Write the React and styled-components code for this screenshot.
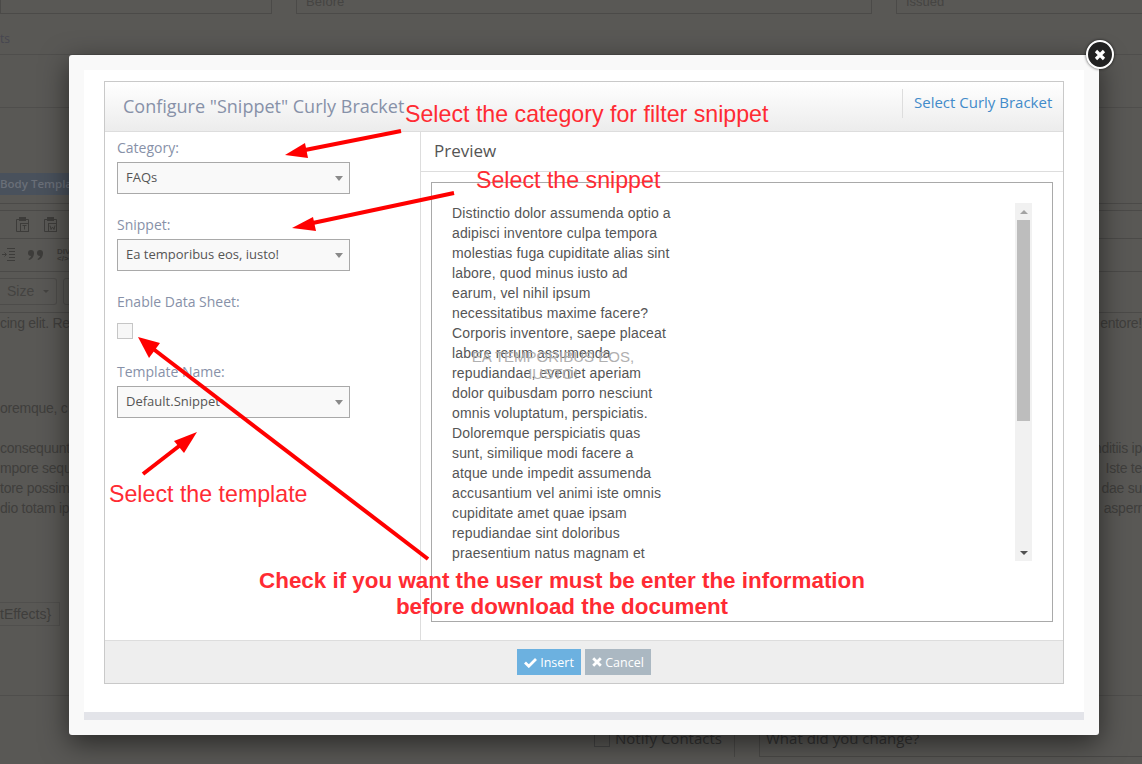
import styled, { createGlobalStyle } from "styled-components";

const GlobalStyle = createGlobalStyle`
  html, body { margin: 0; padding: 0; height: 100%; overflow: hidden; background: #595855; }
  * { box-sizing: border-box; }
`;

const Page = styled.div`
  position: relative;
  width: 1142px;
  height: 764px;
  overflow: hidden;
  background: #595855;
  font-family: "Liberation Sans", Arial, sans-serif;
  font-size: 14px;
  color: #3f3e3c;
`;

/* dimmed page behind the dialog */
const TopFields = styled.div`
  display: grid;
  grid-template-columns: 272px 576px 1fr;
  column-gap: 24px;
  height: 14px;
`;

const TopField = styled.div`
  height: 14px;
  padding-left: 9px;
  overflow: hidden;
  border: 1px solid #4b4a48;
  border-top: 0;
  font-size: 13px;
  line-height: 4px;
  color: #454442;
  margin-right: ${(p) => (p.$last ? "-4px" : "0")};
`;

const TabsRow = styled.div`
  height: 41px;
  padding-top: 17px;
  line-height: 16px;
  font-family: "Open Sans", sans-serif;
  font-size: 12px;
  color: #464650;
  border-bottom: 1px solid #4f4e4c;
`;

const Spacer = styled.div`
  height: ${(p) => p.$h}px;
  border-bottom: ${(p) => (p.$line ? "1px solid #4f4e4c" : "0")};
`;

const BodyTab = styled.div`
  width: 80px;
  height: 22px;
  background: #49515c;
  color: #6a6f78;
  font-family: "Open Sans", sans-serif;
  font-size: 11.5px;
  font-weight: 600;
  line-height: 22px;
  white-space: nowrap;
`;

const ToolbarRow = styled.div`
  display: flex;
  align-items: center;
  gap: ${(p) => p.$gap || 0}px;
  height: ${(p) => p.$h}px;
  padding-left: ${(p) => p.$pl || 0}px;
  border-bottom: 1px solid #4b4a48;
  color: #403f3d;
`;

const SizeRow = styled(ToolbarRow)`
  padding-bottom: 2px;
`;

const SizeBox = styled.div`
  display: flex;
  align-items: center;
  justify-content: space-between;
  width: 57px;
  height: 27px;
  padding: 0 7px 0 7px;
  border: 1px solid #4d4c4a;
  border-left: 0;
  border-radius: 0 3px 3px 0;
  color: #444341;
  font-size: 14px;
`;

const NextBox = styled.div`
  width: 20px;
  height: 27px;
  margin-left: 6px;
  border: 1px solid #4d4c4a;
  border-radius: 3px;
`;

const BgCaret = styled.span`
  width: 0;
  height: 0;
  border-left: 3px solid transparent;
  border-right: 3px solid transparent;
  border-top: 3px solid #444341;
`;

const DivIcon = styled.div`
  font-size: 8px;
  line-height: 7px;
  font-weight: 700;
  color: #3d3c3a;
  white-space: nowrap;
`;

const BgRow = styled.div`
  display: flex;
  justify-content: space-between;
  height: 20px;
  line-height: 20px;
  letter-spacing: -0.25px;
  white-space: nowrap;
  margin-top: ${(p) => p.$mt || 0}px;
`;

const EffectsBox = styled.div`
  width: 60px;
  height: 24px;
  margin-top: ${(p) => p.$mt}px;
  border: 1px solid #504f4d;
  border-left: 0;
  line-height: 22px;
  text-align: right;
  padding-right: 8px;
  white-space: nowrap;
  overflow: hidden;
`;

const BottomRow = styled.div`
  display: flex;
  height: 31px;
  padding-left: 594px;
  font-family: "Open Sans", sans-serif;
  font-size: 15px;
  line-height: 24px;
  color: #333;
`;

const NotifyCheck = styled.div`
  width: 16px;
  height: 16px;
  margin: 5px 5px 0 0;
  border: 1px solid #444;
`;

const NotifyLabel = styled.div`
  width: 120px;
  white-space: nowrap;
  border-right: 1px solid #4a4947;
`;

const NotifyInput = styled.div`
  flex: 1;
  margin-left: 24px;
  padding-left: 6px;
  border-left: 1px solid #4a4947;
  border-bottom: 1px solid #4a4947;
  white-space: nowrap;
`;

/* dialog */
const Modal = styled.div`
  position: absolute;
  left: 69px;
  top: 55px;
  width: 1030px;
  height: 680px;
  padding: 15px;
  background: #f9f9f9;
  border-radius: 3px;
  box-shadow: 0 8px 28px rgba(0, 0, 0, 0.55);
`;

const ModalInner = styled.div`
  display: flex;
  flex-direction: column;
  height: 650px;
  padding: 11px 20px 0;
  background: #fff;
  border-bottom: 8px solid #e3e4e9;
`;

const Panel = styled.div`
  display: flex;
  flex-direction: column;
  height: 603px;
  border: 1px solid #c9c9c9;
  font-family: "Open Sans", sans-serif;
`;

const PanelHeader = styled.div`
  display: flex;
  justify-content: space-between;
  height: 50px;
  border-bottom: 1px solid #ddd;
  background: linear-gradient(#fff, #ececec);
`;

const PanelTitle = styled.div`
  padding: 12px 0 0 18px;
  font-size: 18px;
  line-height: 24px;
  color: #8791a8;
  white-space: nowrap;
`;

const HeaderAction = styled.div`
  margin: 7px 0 13px;
  padding: 3px 11px 0;
  width: 161px;
  border-left: 1px solid #ddd;
  font-size: 15px;
  line-height: 20px;
  color: #428bca;
  white-space: nowrap;
`;

const PanelBody = styled.div`
  display: flex;
  height: 508px;
`;

const Sidebar = styled.div`
  width: 316px;
  flex: none;
  padding: 6px 12px 0;
  border-right: 1px solid #ddd;
`;

const FieldLabel = styled.div`
  height: 20px;
  font-size: 14px;
  line-height: 20px;
  color: #8791a8;
  margin-top: ${(p) => p.$mt || 0}px;
`;

const Select = styled.div`
  display: flex;
  align-items: center;
  justify-content: space-between;
  width: 233px;
  height: 32px;
  margin-top: 4px;
  padding: 0 6px 2px 8px;
  background: #f9f9f9;
  border: 1px solid #a9a9a9;
  font-size: 13px;
  color: #555;
`;

const Caret = styled.span`
  width: 0;
  height: 0;
  margin-top: 2px;
  border-left: 4px solid transparent;
  border-right: 4px solid transparent;
  border-top: 5px solid #8a8a8a;
`;

const Checkbox = styled.div`
  width: 16px;
  height: 16px;
  margin-top: 11px;
  background: #f7f7f7;
  border: 1px solid #c6c6c6;
`;

const PreviewColumn = styled.div`
  flex: 1;
  min-width: 0;
`;

const PreviewHeader = styled.div`
  height: 40px;
  padding: 7px 0 0 13px;
  font-size: 17px;
  line-height: 24px;
  color: #555;
  border-bottom: 1px solid #ddd;
`;

const PreviewBox = styled.div`
  position: relative;
  display: flex;
  justify-content: space-between;
  width: 622px;
  height: 440px;
  margin: 10px 0 0 10px;
  padding: 20px 20px 0 20px;
  border: 1px solid #a9a9a9;
`;

const PreviewText = styled.div`
  width: 225px;
  height: 358px;
  overflow: hidden;
  font-family: "Liberation Sans", Arial, sans-serif;
  font-size: 14px;
  letter-spacing: 0.14px;
  line-height: 20px;
  color: #555;
`;

const GhostText = styled.div`
  position: absolute;
  left: 30px;
  top: 165px;
  width: 182px;
  text-align: center;
  font-family: "Liberation Sans", Arial, sans-serif;
  font-size: 15px;
  line-height: 17px;
  color: #b0b0b0;
`;

const Scrollbar = styled.div`
  display: flex;
  flex-direction: column;
  align-items: center;
  width: 17px;
  height: 358px;
  background: #f1f1f1;
`;

const ScrollArrow = styled.div`
  display: flex;
  align-items: center;
  justify-content: center;
  height: 17px;
  flex: none;
  margin-top: ${(p) => (p.$end ? "auto" : "0")};
`;

const ScrollTriangle = styled.span`
  width: 0;
  height: 0;
  border-left: 4px solid transparent;
  border-right: 4px solid transparent;
  ${(p) => (p.$up ? "border-bottom: 4px solid #a3a3a3;" : "border-top: 4px solid #505050;")}
`;

const ScrollThumb = styled.div`
  width: 13px;
  height: 201px;
  background: #bdbdbd;
`;

const PanelFooter = styled.div`
  display: flex;
  justify-content: center;
  gap: 4px;
  height: 43px;
  padding-top: 8px;
  background: #eee;
  border-top: 1px solid #ddd;
  margin-top: auto;
`;

const ActionButton = styled.div`
  display: flex;
  align-items: center;
  justify-content: center;
  gap: 3px;
  width: ${(p) => p.$w}px;
  height: 26px;
  background: ${(p) => p.$bg};
  color: #fff;
  font-size: 12.5px;
  font-weight: 400;
`;

const CloseButton = styled.div`
  position: absolute;
  left: 1086px;
  top: 40px;
  display: flex;
  align-items: center;
  justify-content: center;
  width: 28px;
  height: 29px;
  border-radius: 50%;
  background: #222;
  border: 2px solid #fff;
  box-shadow: 0 0 3px rgba(0, 0, 0, 0.7);
`;

/* red annotations drawn on top of the screenshot */
const ArrowLayer = styled.svg`
  position: absolute;
  left: 0;
  top: 0;
  pointer-events: none;
`;

const Note = styled.div`
  position: absolute;
  left: ${(p) => p.$x}px;
  top: ${(p) => p.$y}px;
  width: ${(p) => p.$w || "auto"};
  text-align: ${(p) => (p.$w ? "center" : "left")};
  font-family: "Liberation Sans", Arial, sans-serif;
  font-size: ${(p) => (p.$bold ? 22.4 : 23.2)}px;
  font-weight: ${(p) => (p.$bold ? 700 : 400)};
  line-height: ${(p) => (p.$bold ? "26px" : "28px")};
  color: #ff2b33;
  white-space: nowrap;
`;

const previewLines = [
  "Distinctio dolor assumenda optio a",
  "adipisci inventore culpa tempora",
  "molestias fuga cupiditate alias sint",
  "labore, quod minus iusto ad",
  "earum, vel nihil ipsum",
  "necessitatibus maxime facere?",
  "Corporis inventore, saepe placeat",
  "labore rerum assumenda",
  "repudiandae, eveniet aperiam",
  "dolor quibusdam porro nesciunt",
  "omnis voluptatum, perspiciatis.",
  "Doloremque perspiciatis quas",
  "sunt, similique modi facere a",
  "atque unde impedit assumenda",
  "accusantium vel animi iste omnis",
  "cupiditate amet quae ipsam",
  "repudiandae sint doloribus",
  "praesentium natus magnam et",
];

// line, then head as a filled triangle
const arrows = [
  { x1: 401, y1: 131, x2: 300, y2: 151, head: "285,155 305,143 308,158" },
  { x1: 454, y1: 193, x2: 308, y2: 224, head: "292,228 313,217 316,231" },
  { x1: 143, y1: 474, x2: 183, y2: 443, head: "197,432 174,441 184,453" },
  { x1: 428, y1: 559, x2: 152, y2: 348, head: "138,337 160,343 149,358" },
];

function Arrows() {
  return (
    <ArrowLayer width="1142" height="764" viewBox="0 0 1142 764">
      {arrows.map((a) => (
        <g key={a.head}>
          <line x1={a.x1} y1={a.y1} x2={a.x2} y2={a.y2} stroke="#f00" strokeWidth="4" />
          <polygon points={a.head} fill="#f00" />
        </g>
      ))}
    </ArrowLayer>
  );
}

function PasteIcon({ letter }) {
  return (
    <svg width="13" height="15" viewBox="0 0 13 15" fill="none" stroke="#3d3c3a">
      <path d="M3 2.5H.5V14.5H4M10 2.5H12.5V6" />
      <rect x="3.5" y="0.5" width="6" height="3" fill="#3d3c3a" />
      <rect x="4.5" y="6.5" width="8" height="8" />
      <path d={letter === "T" ? "M6.5 8.5H10.5M8.5 8.5V12.5" : "M6 8.5L7 12.5L8.5 10L10 12.5L11 8.5"} />
    </svg>
  );
}

function Background() {
  return (
    <>
      <TopFields>
        <TopField />
        <TopField>Before</TopField>
        <TopField $last>Issued</TopField>
      </TopFields>
      <TabsRow>ts</TabsRow>
      <Spacer $h={53} $line />
      <Spacer $h={65} />
      <BodyTab>Body Template</BodyTab>
      <ToolbarRow $h={9} />
      <ToolbarRow $h={7} />
      <ToolbarRow $h={28} $pl={16} $gap={15}>
        <PasteIcon letter="T" />
        <PasteIcon letter="W" />
      </ToolbarRow>
      <ToolbarRow $h={33} $pl={2} $gap={13}>
        <svg width="13" height="14" viewBox="0 0 13 14" stroke="#3d3c3a" fill="none">
          <path d="M5 .5H13M7 3.5H13M7 6.5H13M7 9.5H13M5 12.5H13M0 6.5H4M2.5 4.5L4.5 6.5L2.5 8.5" />
        </svg>
        <svg width="16" height="10" viewBox="0 0 16 10" fill="#3d3c3a">
          <path d="M0 3a3 3 0 1 1 6 0C6 7 4 9 1 10L.5 9C2 8 3 7 3 6A3 3 0 0 1 0 3ZM9 3a3 3 0 1 1 6 0C15 7 13 9 10 10L9.500 9C11 8 12 7 12 6A3 3 0 0 1 9 3Z" />
        </svg>
        <DivIcon>
          DIV
          <br />
          {"</>"}
        </DivIcon>
      </ToolbarRow>
      <SizeRow $h={41}>
        <SizeBox>
          Size
          <BgCaret />
        </SizeBox>
        <NextBox />
      </SizeRow>
      <BgRow>
        <span>cing elit. Re</span>
        <span>entore!</span>
      </BgRow>
      <BgRow $mt={65}>
        <span>oremque, c</span>
      </BgRow>
      <BgRow $mt={20}>
        <span>consequunt</span>
        <span>nditiis ip</span>
      </BgRow>
      <BgRow>
        <span>mpore sequ</span>
        <span>Iste te</span>
      </BgRow>
      <BgRow>
        <span>tore possim</span>
        <span>dae su</span>
      </BgRow>
      <BgRow>
        <span>dio totam ip</span>
        <span>asperr</span>
      </BgRow>
      <EffectsBox $mt={84}>tEffects}</EffectsBox>
      <Spacer $h={70} $line />
      <Spacer $h={30} />
      <BottomRow>
        <NotifyCheck />
        <NotifyLabel>Notify Contacts</NotifyLabel>
        <NotifyInput>What did you change?</NotifyInput>
      </BottomRow>
    </>
  );
}

export default function App() {
  return (
    <Page>
      <GlobalStyle />
      <Background />
      <Modal>
        <ModalInner>
          <Panel>
            <PanelHeader>
              <PanelTitle>Configure "Snippet" Curly Bracket</PanelTitle>
              <HeaderAction>Select Curly Bracket</HeaderAction>
            </PanelHeader>
            <PanelBody>
              <Sidebar>
                <FieldLabel>Category:</FieldLabel>
                <Select>
                  FAQs
                  <Caret />
                </Select>
                <FieldLabel $mt={21}>Snippet:</FieldLabel>
                <Select>
                  Ea temporibus eos, iusto!
                  <Caret />
                </Select>
                <FieldLabel $mt={21}>Enable Data Sheet:</FieldLabel>
                <Checkbox />
                <FieldLabel $mt={23}>Template Name:</FieldLabel>
                <Select>
                  Default.Snippet
                  <Caret />
                </Select>
              </Sidebar>
              <PreviewColumn>
                <PreviewHeader>Preview</PreviewHeader>
                <PreviewBox>
                  <PreviewText>
                    {previewLines.map((line) => (
                      <div key={line}>{line}</div>
                    ))}
                  </PreviewText>
                  <GhostText>EA TEMPORIBUS EOS, IUSTO!</GhostText>
                  <Scrollbar>
                    <ScrollArrow>
                      <ScrollTriangle $up />
                    </ScrollArrow>
                    <ScrollThumb />
                    <ScrollArrow $end>
                      <ScrollTriangle />
                    </ScrollArrow>
                  </Scrollbar>
                </PreviewBox>
              </PreviewColumn>
            </PanelBody>
            <PanelFooter>
              <ActionButton $w={64} $bg="#6cb1e0">
                <svg width="13" height="11" viewBox="0 0 13 11">
                  <path d="M1 5.500 L4.800 9.200 L12 2" fill="none" stroke="#fff" strokeWidth="2.800" />
                </svg>
                Insert
              </ActionButton>
              <ActionButton $w={66} $bg="#abb8c2">
                <svg width="10" height="10" viewBox="0 0 10 10">
                  <path d="M1.200 1.200 L8.800 8.800 M8.800 1.200 L1.200 8.800" fill="none" stroke="#fff" strokeWidth="2.800" />
                </svg>
                Cancel
              </ActionButton>
            </PanelFooter>
          </Panel>
        </ModalInner>
      </Modal>
      <CloseButton>
        <svg width="12" height="12" viewBox="0 0 12 12">
          <path d="M2 2 L10 10 M10 2 L2 10" fill="none" stroke="#fff" strokeWidth="3.200" />
        </svg>
      </CloseButton>
      <Arrows />
      <Note $x={405} $y={100}>Select the category for filter snippet</Note>
      <Note $x={476} $y={166}>Select the snippet</Note>
      <Note $x={109} $y={480}>Select the template</Note>
      <Note $x={212} $y={568} $w="700px" $bold>
        Check if you want the user must be enter the information
        <br />
        before download the document
      </Note>
    </Page>
  );
}
